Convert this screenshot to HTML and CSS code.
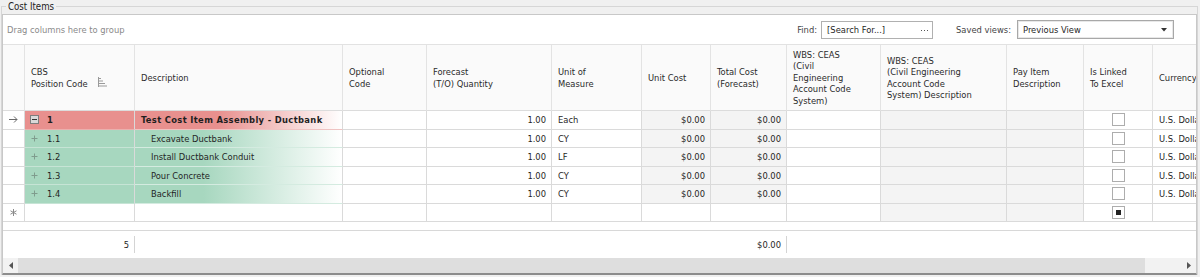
FILE: index.html
```html
<!DOCTYPE html>
<html lang="en">
<head>
    <meta charset="UTF-8">
    <title>Cost Items</title>
    <link rel="stylesheet" href="styles.css">
</head>
<body>
    <fieldset class="group">
        <legend>Cost Items</legend>
        <div class="grid">
            <!-- group-by panel with find box and saved views -->
            <div class="group-panel">
                <span class="hint">Drag columns here to group</span>
                <div class="tools">
                    <span class="tool-label">Find:</span>
                    <div class="search">
                        <span>[Search For...]</span>
                        <svg class="dots" width="7" height="2" viewBox="0 0 7 2"><path d="M0 0H1V1H0ZM3 0H4V1H3ZM6 0H7V1H6Z" fill="#555"/></svg>
                    </div>
                    <span class="tool-label views">Saved views:</span>
                    <div class="combo">
                        <span>Previous View</span>
                        <svg width="6" height="4" viewBox="0 0 6 4"><path d="M0 0H6L3 3.5Z" fill="#333"/></svg>
                    </div>
                </div>
            </div>

            <div class="rows">
                <div class="row head">
                    <div class="c"></div>
                    <div class="c">
                        <span>CBS<br>Position Code</span>
                        <svg class="sort" width="9" height="10" viewBox="0 0 9 10">
                            <path d="M0.5 0V10M1 1.5H3M1 4H5M1 6.5H7M1 9H9" stroke="#9a9a9a" stroke-width="1"/>
                        </svg>
                    </div>
                    <div class="c">Description</div>
                    <div class="c">Optional<br>Code</div>
                    <div class="c">Forecast<br>(T/O) Quantity</div>
                    <div class="c">Unit of<br>Measure</div>
                    <div class="c">Unit Cost</div>
                    <div class="c">Total Cost<br>(Forecast)</div>
                    <div class="c">WBS: CEAS<br>(Civil<br>Engineering<br>Account Code<br>System)</div>
                    <div class="c">WBS: CEAS<br>(Civil Engineering<br>Account Code<br>System) Description</div>
                    <div class="c">Pay Item<br>Description</div>
                    <div class="c">Is Linked<br>To Excel</div>
                    <div class="c">Currency</div>
                </div>

                <div class="row parent">
                    <div class="c ind">
                        <svg width="9" height="7" viewBox="0 0 9 7"><path d="M0 3.5H8M5 0.5L8 3.5L5 6.5" stroke="#6a6a6a" fill="none"/></svg>
                    </div>
                    <div class="c code">
                        <svg class="toggle" width="9" height="9" viewBox="0 0 9 9"><rect x="0.5" y="0.5" width="8" height="8" fill="#d9d9d9" stroke="#7d7d7d"/><path d="M2 4.5H7" stroke="#333"/></svg>
                        <b>1</b>
                    </div>
                    <div class="c desc"><b>Test Cost Item Assembly - Ductbank</b></div>
                    <div class="c"></div>
                    <div class="c num">1.00</div>
                    <div class="c">Each</div>
                    <div class="c num ro">$0.00</div>
                    <div class="c num ro">$0.00</div>
                    <div class="c"></div>
                    <div class="c ro"></div>
                    <div class="c ro"></div>
                    <div class="c mid"><span class="chk"></span></div>
                    <div class="c">U.S. Dollar</div>
                </div>

                <div class="row child">
                    <div class="c ind"></div>
                    <div class="c code">
                        <svg class="toggle" width="9" height="9" viewBox="0 0 9 9"><path d="M4.5 1.5V7.5M1.5 4.5H7.5" stroke="#7f9c8d"/></svg>
                        1.1
                    </div>
                    <div class="c desc">Excavate Ductbank</div>
                    <div class="c"></div>
                    <div class="c num">1.00</div>
                    <div class="c">CY</div>
                    <div class="c num ro">$0.00</div>
                    <div class="c num ro">$0.00</div>
                    <div class="c"></div>
                    <div class="c ro"></div>
                    <div class="c ro"></div>
                    <div class="c mid"><span class="chk"></span></div>
                    <div class="c">U.S. Dollar</div>
                </div>

                <div class="row child">
                    <div class="c ind"></div>
                    <div class="c code">
                        <svg class="toggle" width="9" height="9" viewBox="0 0 9 9"><path d="M4.5 1.5V7.5M1.5 4.5H7.5" stroke="#7f9c8d"/></svg>
                        1.2
                    </div>
                    <div class="c desc">Install Ductbank Conduit</div>
                    <div class="c"></div>
                    <div class="c num">1.00</div>
                    <div class="c">LF</div>
                    <div class="c num ro">$0.00</div>
                    <div class="c num ro">$0.00</div>
                    <div class="c"></div>
                    <div class="c ro"></div>
                    <div class="c ro"></div>
                    <div class="c mid"><span class="chk"></span></div>
                    <div class="c">U.S. Dollar</div>
                </div>

                <div class="row child">
                    <div class="c ind"></div>
                    <div class="c code">
                        <svg class="toggle" width="9" height="9" viewBox="0 0 9 9"><path d="M4.5 1.5V7.5M1.5 4.5H7.5" stroke="#7f9c8d"/></svg>
                        1.3
                    </div>
                    <div class="c desc">Pour Concrete</div>
                    <div class="c"></div>
                    <div class="c num">1.00</div>
                    <div class="c">CY</div>
                    <div class="c num ro">$0.00</div>
                    <div class="c num ro">$0.00</div>
                    <div class="c"></div>
                    <div class="c ro"></div>
                    <div class="c ro"></div>
                    <div class="c mid"><span class="chk"></span></div>
                    <div class="c">U.S. Dollar</div>
                </div>

                <div class="row child">
                    <div class="c ind"></div>
                    <div class="c code">
                        <svg class="toggle" width="9" height="9" viewBox="0 0 9 9"><path d="M4.5 1.5V7.5M1.5 4.5H7.5" stroke="#7f9c8d"/></svg>
                        1.4
                    </div>
                    <div class="c desc">Backfill</div>
                    <div class="c"></div>
                    <div class="c num">1.00</div>
                    <div class="c">CY</div>
                    <div class="c num ro">$0.00</div>
                    <div class="c num ro">$0.00</div>
                    <div class="c"></div>
                    <div class="c ro"></div>
                    <div class="c ro"></div>
                    <div class="c mid"><span class="chk"></span></div>
                    <div class="c">U.S. Dollar</div>
                </div>

                <!-- new item row -->
                <div class="row">
                    <div class="c ind">
                        <svg width="7" height="7" viewBox="0 0 7 7"><path d="M3.5 0V7M0.5 1.8L6.5 5.2M0.5 5.2L6.5 1.8" stroke="#8a8a8a"/></svg>
                    </div>
                    <div class="c"></div>
                    <div class="c"></div>
                    <div class="c"></div>
                    <div class="c"></div>
                    <div class="c"></div>
                    <div class="c"></div>
                    <div class="c"></div>
                    <div class="c"></div>
                    <div class="c ro"></div>
                    <div class="c ro"></div>
                    <div class="c mid"><span class="chk partial"></span></div>
                    <div class="c"></div>
                </div>
            </div>

            <div class="row footer">
                <div></div>
                <div class="sum">5</div>
                <div></div>
                <div></div>
                <div></div>
                <div></div>
                <div></div>
                <div class="sum">$0.00</div>
                <div></div>
                <div></div>
                <div></div>
                <div></div>
                <div></div>
            </div>

            <div class="hscroll">
                <div class="btn">
                    <svg width="4" height="7" viewBox="0 0 4 7"><path d="M4 0V7L0 3.5Z" fill="#555"/></svg>
                </div>
                <div class="thumb"></div>
                <div class="btn right">
                    <svg width="4" height="7" viewBox="0 0 4 7"><path d="M0 0V7L4 3.5Z" fill="#555"/></svg>
                </div>
            </div>
        </div>
    </fieldset>
</body>
</html>
```

FILE: styles.css
```css
body {
    margin: 0;
    background: #f0f0f0;
    font-family: "DejaVu Sans Condensed", "Liberation Sans", sans-serif;
    font-size: 9.3px;
    color: #1f1f1f;
    overflow: hidden;
}

b {
    letter-spacing: 0.35px;
}

.group {
    margin: 0 2px 0 1px;
    padding: 1px 0 0 0;
    border: 1px solid #d6d6d6;
    border-bottom: none;
    min-width: 0;
}

.group legend {
    margin-left: 4px;
    padding: 0 2px;
    font-size: 9.6px;
    line-height: 13px;
    color: #222;
}

.grid {
    background: #fff;
    border: 1px solid #c8c8c8;
    border-bottom: 2px solid #8c8c8c;
    overflow: hidden;
}

/* top panel */
.group-panel {
    height: 29px;
    display: flex;
    align-items: center;
    justify-content: space-between;
    padding: 0 22px 0 4px;
    border-bottom: 1px solid #e2e2e2;
}

.hint {
    color: #8a8a8a;
}

.tools {
    display: flex;
    align-items: center;
}

.tool-label {
    color: #444;
    margin-right: 4px;
}

.tool-label.views {
    margin-left: 23px;
    margin-right: 6px;
}

.search {
    width: 112px;
    height: 18px;
    box-sizing: border-box;
    border: 1px solid #b0b0b0;
    display: flex;
    align-items: center;
    justify-content: space-between;
    padding: 0 4px 0 5px;
}

.search .dots {
    margin-top: 2px;
}

.combo {
    width: 157px;
    height: 19px;
    box-sizing: border-box;
    border: 1px solid #a8a8a8;
    box-shadow: inset 0 0 0 1px #e8e8e8;
    display: flex;
    align-items: center;
    justify-content: space-between;
    padding: 0 6px 0 5px;
}

/* grid rows */
.rows {
    height: 185px;
}

.row {
    display: grid;
    grid-template-columns: 22px 110px 208px 84px 125px 90px 69px 76px 94px 126px 77px 69px 87px;
    width: 1237px;
    height: 18.5px;
}

.c {
    box-sizing: border-box;
    border-right: 1px solid #dadada;
    border-bottom: 1px solid #dadada;
    padding: 0 5px 0 6px;
    display: flex;
    align-items: center;
    white-space: nowrap;
    overflow: hidden;
}

.row.head {
    height: 66px;
}

.head .c {
    background: #fafafa;
    border-right-color: #e3e3e3;
    border-bottom-color: #dcdcdc;
    line-height: 11.5px;
    color: #2a2a2a;
}

.head .sort {
    margin-left: 10px;
    margin-top: 9px;
}

.ind {
    justify-content: center;
    padding: 0;
}

.code {
    padding-left: 5px;
}

.toggle {
    margin-right: 8px;
    flex-shrink: 0;
}

.num {
    justify-content: flex-end;
}

.ro {
    background: #f4f4f4;
}

.mid {
    justify-content: center;
    padding: 0;
}

.parent .code {
    background: #e8908e;
    border-bottom-color: #eab0ae;
}

.parent .desc {
    background: linear-gradient(90deg, #e8908e 40%, #fff 100%);
    border-bottom-color: #efc3c2;
}

.child .code {
    background: #a7d7bf;
    border-bottom-color: #c6e4d5;
}

.child .desc {
    padding-left: 16px;
    background: linear-gradient(90deg, #a7d7bf 33%, #fff 100%);
    border-bottom-color: #d4ebe0;
}

.chk {
    width: 13px;
    height: 13px;
    box-sizing: border-box;
    border: 1px solid #adadad;
    background: #fff;
    display: flex;
    align-items: center;
    justify-content: center;
}

.chk.partial::after {
    content: "";
    width: 5px;
    height: 5px;
    background: #222;
}

/* summary footer */
.row.footer {
    height: 28px;
    box-sizing: border-box;
    border-top: 1px solid #d8d8d8;
    align-items: center;
}

.sum {
    height: 17px;
    line-height: 17px;
    text-align: right;
    padding-right: 5px;
    border-right: 1px solid #d4d4d4;
}

/* horizontal scroll bar */
.hscroll {
    height: 15px;
    display: flex;
    background: #f2f2f2;
}

.hscroll .btn {
    width: 15px;
    display: flex;
    align-items: center;
    justify-content: center;
}

.hscroll .thumb {
    width: 1127px;
    background: #dedede;
}

.hscroll .btn.right {
    flex: 1;
    justify-content: flex-end;
    padding-right: 5px;
}
```
